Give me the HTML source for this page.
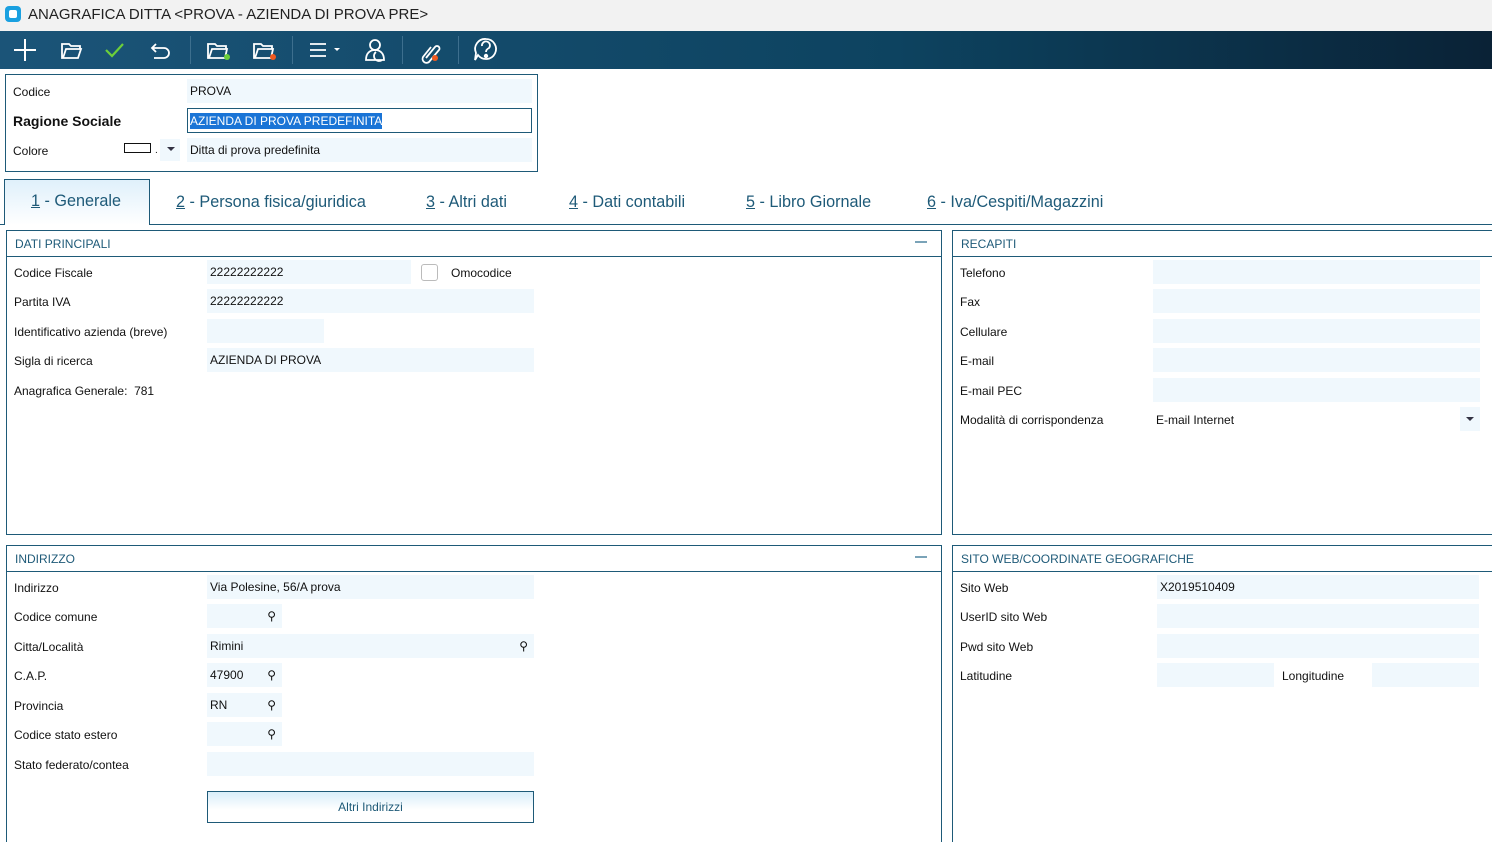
<!DOCTYPE html><html><head><meta charset="utf-8"><style>
*{box-sizing:border-box;margin:0;padding:0}
html,body{width:1492px;height:842px;overflow:hidden}
body{background:#fff;font-family:"Liberation Sans",sans-serif;font-size:12px;color:#111;position:relative}
.a{position:absolute}
.f{position:absolute;background:#f0f8fd;height:24px;line-height:25px;padding-left:3px}
.l{position:absolute;line-height:18px}
.pan{position:absolute;border:1px solid #1e5a78}
.ph{position:absolute;left:0;right:0;top:0;height:26px;border-bottom:1px solid #1e5a78;color:#1e5a78;padding:6px 0 0 8px;font-size:12px}
.mn{position:absolute;right:14px;top:10px;width:12px;height:2px;background:#7aa3b8}
.tab{position:absolute;top:193px;font-size:16.2px;color:#1e5a78}
.tab u{text-decoration:underline}
.sr{position:absolute;right:6px;top:0}
.sep{position:absolute;top:36px;width:1px;height:28px;background:#3d6f8e}
</style></head><body>
<div class="a" style="left:0;top:0;width:1492px;height:31px;background:#f2f2f2"></div>
<div class="a" style="left:5px;top:6px;width:16px;height:16px;background:#1aa0e0;border-radius:4px"><div class="a" style="left:4px;top:4px;width:8px;height:8px;background:#fff;border-radius:2px"></div></div>
<div class="a" style="left:28px;top:6px;font-size:15px;color:#222">ANAGRAFICA DITTA &lt;PROVA - AZIENDA DI PROVA PRE&gt;</div>
<div class="a" style="left:0;top:31px;width:1492px;height:38px;background:linear-gradient(90deg,#1b5478 0%,#0d4360 60%,#0a2236 100%)"></div>
<svg class="a" style="left:0;top:31px" width="520" height="38" fill="none" stroke="#fff" stroke-width="2">
<path d="M25 8v22M14 19h22"/>
<path d="M62 13h7l2 2h9v3H66l-3 9h-1z M66 18h15l-3 9H63" stroke-width="1.8"/>
<path d="M106 19l6 6 11-12" stroke="#6ccf3a" stroke-width="2.2"/>
<path d="M156 13l-4 4 4 4M152 17h12a5 5 0 010 10h-10" stroke-width="1.8"/>
<path d="M208 13h7l2 2h9v3h-14l-3 9h-1zM212 18h15l-2 9h-17" stroke-width="1.8"/>
<circle cx="227" cy="26" r="3" fill="#6ccf3a" stroke="none"/>
<path d="M254 13h7l2 2h9v3h-14l-3 9h-1zM258 18h15l-2 9h-17" stroke-width="1.8"/>
<circle cx="273" cy="26" r="3" fill="#f05a20" stroke="none"/>
<path d="M310 13h16M310 19h16M310 25h16" stroke-width="1.8"/><path d="M334 17l3 3 3-3z" fill="#fff" stroke="none"/>
<circle cx="375" cy="14" r="5" stroke-width="1.8"/><path d="M366 29c0-7 4-10 9-10s9 3 9 10zM376 21a5 5 0 106 8" stroke-width="1.8"/>
<path d="M426 27l9-11a2.5 2.5 0 014 3l-10 12a4 4 0 01-6-5l8-10" stroke-width="1.8"/><circle cx="435" cy="27" r="3" fill="#f05a20" stroke="none"/>
<path d="M486 8a10 10 0 11-8 16l-3 5 1-7A10 10 0 01486 8z" stroke-width="1.8"/><path d="M482 15a4 4 0 117 2c-2 1-3 2-3 4" stroke-width="1.8"/><circle cx="486" cy="25" r="1.2" fill="#fff"/>
</svg>
<div class="sep" style="left:190px"></div><div class="sep" style="left:292px"></div><div class="sep" style="left:402px"></div><div class="sep" style="left:458px"></div>

<div class="a" style="left:5px;top:74px;width:533px;height:98px;border:1px solid #1e5a78"></div>
<div class="l" style="left:13px;top:83px">Codice</div>
<div class="f" style="left:187px;top:79px;width:345px">PROVA</div>
<div class="l" style="left:13px;top:112px;font-size:14px;font-weight:bold">Ragione Sociale</div>
<div class="a" style="left:187px;top:108px;width:345px;height:25px;border:1px solid #1e5a78;padding:4px 2px"><span style="background:#1a74d6;color:#fff;line-height:16px;display:inline-block">AZIENDA DI PROVA PREDEFINITA</span></div>
<div class="l" style="left:13px;top:142px">Colore</div>
<div class="a" style="left:124px;top:143px;width:27px;height:10px;border:1px solid #111"></div>
<div class="a" style="left:155px;top:145px;font-size:10px">.</div>
<div class="a" style="left:160px;top:139px;width:20px;height:22px;background:#f0f8fd"></div>
<div class="a" style="left:167px;top:147px;border:4px solid transparent;border-top:4px solid #334;border-bottom:0"></div>
<div class="f" style="left:187px;top:138px;width:345px">Ditta di prova predefinita</div>

<div class="a" style="left:0;top:224px;width:1492px;height:1px;background:#1e5a78"></div>
<div class="a" style="left:4px;top:179px;width:146px;height:46px;border:1px solid #1e5a78;border-bottom:none;background:linear-gradient(#dff0fb,#fff)"></div>
<div class="tab" style="left:31px;top:192px"><u>1</u> - Generale</div>
<div class="tab" style="left:176px"><u>2</u> - Persona fisica/giuridica</div>
<div class="tab" style="left:426px"><u>3</u> - Altri dati</div>
<div class="tab" style="left:569px"><u>4</u> - Dati contabili</div>
<div class="tab" style="left:746px"><u>5</u> - Libro Giornale</div>
<div class="tab" style="left:927px"><u>6</u> - Iva/Cespiti/Magazzini</div>

<div class="pan" style="left:6px;top:230px;width:936px;height:305px"><div class="ph">DATI PRINCIPALI</div><div class="mn"></div></div>
<div class="pan" style="left:952px;top:230px;width:540px;height:305px;border-right:none"><div class="ph">RECAPITI</div></div>
<div class="pan" style="left:6px;top:545px;width:936px;height:297px;border-bottom:none"><div class="ph">INDIRIZZO</div><div class="mn"></div></div>
<div class="pan" style="left:952px;top:545px;width:540px;height:297px;border-bottom:none;border-right:none"><div class="ph">SITO WEB/COORDINATE GEOGRAFICHE</div></div>

<div class="l" style="left:14px;top:264px">Codice Fiscale</div><div class="f" style="left:207px;top:260px;width:204px">22222222222</div>
<div class="a" style="left:421px;top:264px;width:17px;height:17px;border:1px solid #bbb;border-radius:3px"></div>
<div class="l" style="left:451px;top:264px">Omocodice</div>
<div class="l" style="left:14px;top:293px">Partita IVA</div><div class="f" style="left:207px;top:289px;width:327px">22222222222</div>
<div class="l" style="left:14px;top:323px">Identificativo azienda (breve)</div><div class="f" style="left:207px;top:319px;width:117px"></div>
<div class="l" style="left:14px;top:352px">Sigla di ricerca</div><div class="f" style="left:207px;top:348px;width:327px">AZIENDA DI PROVA</div>
<div class="l" style="left:14px;top:382px">Anagrafica Generale:&nbsp; 781</div>

<div class="l" style="left:960px;top:264px">Telefono</div><div class="f" style="left:1153px;top:260px;width:327px"></div>
<div class="l" style="left:960px;top:293px">Fax</div><div class="f" style="left:1153px;top:289px;width:327px"></div>
<div class="l" style="left:960px;top:323px">Cellulare</div><div class="f" style="left:1153px;top:319px;width:327px"></div>
<div class="l" style="left:960px;top:352px">E-mail</div><div class="f" style="left:1153px;top:348px;width:327px"></div>
<div class="l" style="left:960px;top:382px">E-mail PEC</div><div class="f" style="left:1153px;top:378px;width:327px"></div>
<div class="l" style="left:960px;top:411px">Modalità di corrispondenza</div>
<div class="l" style="left:1156px;top:411px">E-mail Internet</div>
<div class="a" style="left:1460px;top:407px;width:20px;height:24px;background:#f0f8fd"></div>
<div class="a" style="left:1466px;top:417px;border:4px solid transparent;border-top:4px solid #334;border-bottom:0"></div>

<div class="l" style="left:14px;top:579px">Indirizzo</div><div class="f" style="left:207px;top:575px;width:327px">Via Polesine, 56/A prova</div>
<div class="l" style="left:14px;top:608px">Codice comune</div><div class="f" style="left:207px;top:604px;width:75px"><span class="sr">⚲</span></div>
<div class="l" style="left:14px;top:638px">Citta/Località</div><div class="f" style="left:207px;top:634px;width:327px">Rimini<span class="sr">⚲</span></div>
<div class="l" style="left:14px;top:667px">C.A.P.</div><div class="f" style="left:207px;top:663px;width:75px">47900<span class="sr">⚲</span></div>
<div class="l" style="left:14px;top:697px">Provincia</div><div class="f" style="left:207px;top:693px;width:75px">RN<span class="sr">⚲</span></div>
<div class="l" style="left:14px;top:726px">Codice stato estero</div><div class="f" style="left:207px;top:722px;width:75px"><span class="sr">⚲</span></div>
<div class="l" style="left:14px;top:756px">Stato federato/contea</div><div class="f" style="left:207px;top:752px;width:327px"></div>
<div class="a" style="left:207px;top:791px;width:327px;height:32px;border:1px solid #1e5a78;background:linear-gradient(#d9eefa,#fff 60%);color:#1e5a78;text-align:center;line-height:31px">Altri Indirizzi</div>

<div class="l" style="left:960px;top:579px">Sito Web</div><div class="f" style="left:1157px;top:575px;width:322px">X2019510409</div>
<div class="l" style="left:960px;top:608px">UserID sito Web</div><div class="f" style="left:1157px;top:604px;width:322px"></div>
<div class="l" style="left:960px;top:638px">Pwd sito Web</div><div class="f" style="left:1157px;top:634px;width:322px"></div>
<div class="l" style="left:960px;top:667px">Latitudine</div><div class="f" style="left:1157px;top:663px;width:117px"></div>
<div class="l" style="left:1282px;top:667px">Longitudine</div><div class="f" style="left:1372px;top:663px;width:107px"></div>
</body></html>
